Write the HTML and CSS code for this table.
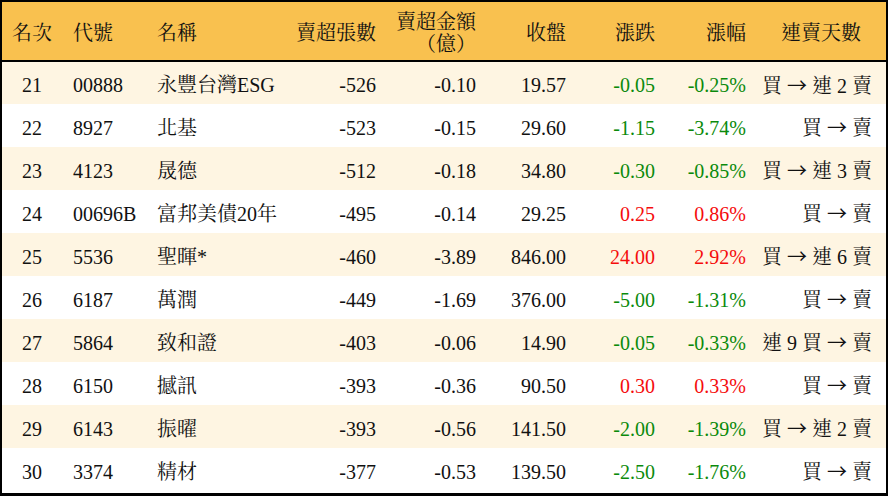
FILE: index.html
```html
<!DOCTYPE html>
<html lang="zh-Hant">
<head>
<meta charset="utf-8">
<title>賣超排行</title>
<link rel="stylesheet" href="styles.css">
</head>
<body>
<div class="frame">
<table class="rank">
<colgroup>
<col class="c1"><col class="c2"><col class="c3"><col class="c4"><col class="c5"><col class="c6"><col class="c7"><col class="c8"><col class="c9">
</colgroup>
<thead>
<tr>
<th class="ctr">名次</th>
<th class="lft">代號</th>
<th class="lft">名稱</th>
<th class="num">賣超張數</th>
<th class="num">賣超金額<br>（億）</th>
<th class="num">收盤</th>
<th class="num">漲跌</th>
<th class="num">漲幅</th>
<th class="ctr">連賣天數</th>
</tr>
</thead>
<tbody>
<tr class="odd"><td class="ctr">21</td><td class="lft">00888</td><td class="lft">永豐台灣ESG</td><td class="num">-526</td><td class="num">-0.10</td><td class="num">19.57</td><td class="num dn">-0.05</td><td class="num dn">-0.25%</td><td class="days">買 <span class="arr">→</span> 連 2 賣</td></tr>
<tr><td class="ctr">22</td><td class="lft">8927</td><td class="lft">北基</td><td class="num">-523</td><td class="num">-0.15</td><td class="num">29.60</td><td class="num dn">-1.15</td><td class="num dn">-3.74%</td><td class="days">買 <span class="arr">→</span> 賣</td></tr>
<tr class="odd"><td class="ctr">23</td><td class="lft">4123</td><td class="lft">晟德</td><td class="num">-512</td><td class="num">-0.18</td><td class="num">34.80</td><td class="num dn">-0.30</td><td class="num dn">-0.85%</td><td class="days">買 <span class="arr">→</span> 連 3 賣</td></tr>
<tr><td class="ctr">24</td><td class="lft">00696B</td><td class="lft">富邦美債20年</td><td class="num">-495</td><td class="num">-0.14</td><td class="num">29.25</td><td class="num up">0.25</td><td class="num up">0.86%</td><td class="days">買 <span class="arr">→</span> 賣</td></tr>
<tr class="odd"><td class="ctr">25</td><td class="lft">5536</td><td class="lft">聖暉*</td><td class="num">-460</td><td class="num">-3.89</td><td class="num">846.00</td><td class="num up">24.00</td><td class="num up">2.92%</td><td class="days">買 <span class="arr">→</span> 連 6 賣</td></tr>
<tr><td class="ctr">26</td><td class="lft">6187</td><td class="lft">萬潤</td><td class="num">-449</td><td class="num">-1.69</td><td class="num">376.00</td><td class="num dn">-5.00</td><td class="num dn">-1.31%</td><td class="days">買 <span class="arr">→</span> 賣</td></tr>
<tr class="odd"><td class="ctr">27</td><td class="lft">5864</td><td class="lft">致和證</td><td class="num">-403</td><td class="num">-0.06</td><td class="num">14.90</td><td class="num dn">-0.05</td><td class="num dn">-0.33%</td><td class="days">連 9 買 <span class="arr">→</span> 賣</td></tr>
<tr><td class="ctr">28</td><td class="lft">6150</td><td class="lft">撼訊</td><td class="num">-393</td><td class="num">-0.36</td><td class="num">90.50</td><td class="num up">0.30</td><td class="num up">0.33%</td><td class="days">買 <span class="arr">→</span> 賣</td></tr>
<tr class="odd"><td class="ctr">29</td><td class="lft">6143</td><td class="lft">振曜</td><td class="num">-393</td><td class="num">-0.56</td><td class="num">141.50</td><td class="num dn">-2.00</td><td class="num dn">-1.39%</td><td class="days">買 <span class="arr">→</span> 連 2 賣</td></tr>
<tr><td class="ctr">30</td><td class="lft">3374</td><td class="lft">精材</td><td class="num">-377</td><td class="num">-0.53</td><td class="num">139.50</td><td class="num dn">-2.50</td><td class="num dn">-1.76%</td><td class="days">買 <span class="arr">→</span> 賣</td></tr>
</tbody>
</table>
</div>
</body>
</html>
```

FILE: styles.css
```css
html, body {
  margin: 0;
  padding: 0;
  background: #ffffff;
}

.frame {
  width: 888px;
  height: 496px;
  box-sizing: border-box;
  border: 2px solid #000;
  border-bottom-width: 3px;
  overflow: hidden;
}

.rank {
  width: 884px;
  border-collapse: collapse;
  border-spacing: 0;
  table-layout: fixed;
  font-family: "Liberation Serif", "Noto Serif CJK TC", "Noto Sans CJK TC", serif;
  font-size: 20px;
  color: #111;
}

.c1 { width: 60px; }
.c2 { width: 84px; }
.c3 { width: 144px; }
.c4 { width: 96px; }
.c5 { width: 100px; }
.c6 { width: 90px; }
.c7 { width: 89px; }
.c8 { width: 91px; }
.c9 { width: 130px; }

.rank thead th {
  height: 59px;
  background: #f9c14f;
  font-weight: normal;
  line-height: 22px;
  border-bottom: 2px solid #000;
  padding: 3px 0 0 0;
  vertical-align: middle;
  box-sizing: border-box;
}

.rank td {
  height: 43px;
  padding: 4px 0 0 0;
  line-height: 22px;
  vertical-align: middle;
  white-space: nowrap;
  box-sizing: border-box;
}

.rank tbody tr.odd td {
  background: #fef5e2;
}

.ctr { text-align: center; }
.lft { text-align: left; padding-left: 11px !important; }
.num { text-align: right; padding-right: 10px !important; }
.days { text-align: right; padding-right: 14px !important; }

.arr {
  font-family: "Noto Sans CJK TC", sans-serif;
  font-size: 20px;
}

.dn { color: #0b8a0b; }
.up { color: #f50c0c; }
```
